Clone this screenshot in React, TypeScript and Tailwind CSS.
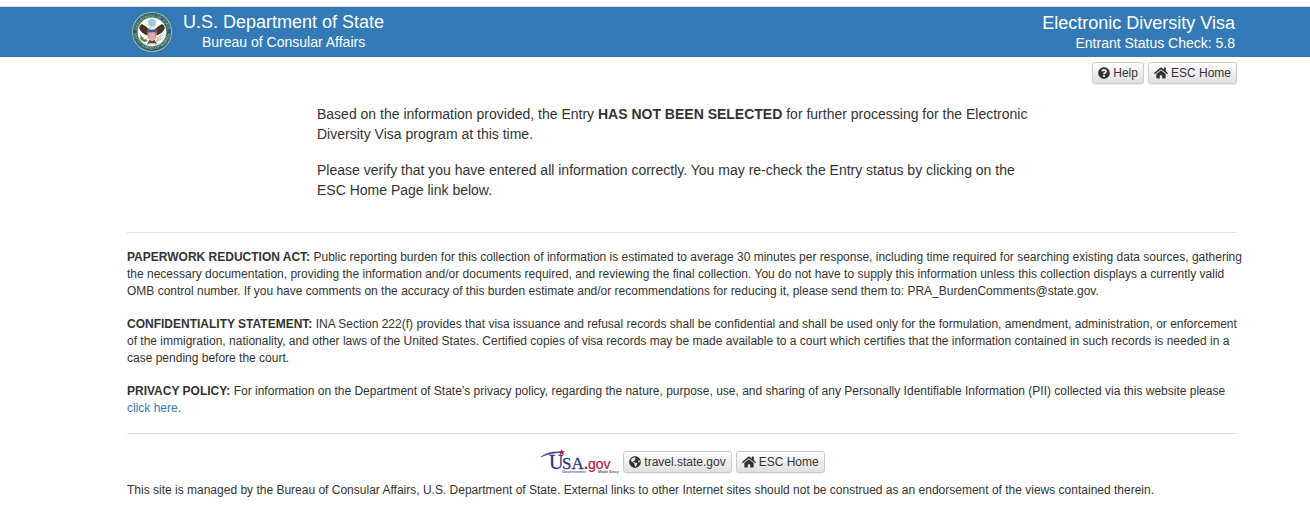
import type { ReactNode } from "react";
import { FaGlobeAmericas, FaHome, FaQuestionCircle } from "react-icons/fa";

function StateSeal() {
  return (
    <svg viewBox="0 0 120 120" className="size-10 shrink-0" role="img" aria-label="Department of State seal">
      <defs>
        <path id="seal-top" d="M14 61a46 46 0 0 1 92 0" />
        <path id="seal-bottom" d="M6 58a54 54 0 0 0 108 0" />
      </defs>
      <circle cx="60" cy="60" r="60" fill="#b9b884" />
      <circle cx="60" cy="60" r="57" fill="#1f5f7c" />
      <circle cx="60" cy="60" r="44" fill="#c9bd7c" />
      <circle cx="60" cy="60" r="42" fill="#fdfdfa" />
      <g fill="#d6d292" fontFamily="Liberation Sans, sans-serif" fontSize="11">
        <text textAnchor="middle">
          <textPath href="#seal-top" startOffset="50%">DEPARTMENT OF STATE</textPath>
        </text>
        <text textAnchor="middle">
          <textPath href="#seal-bottom" startOffset="50%">UNITED STATES OF AMERICA</textPath>
        </text>
      </g>
      <circle cx="60" cy="32" r="12" fill="#9ccbe8" />
      <path d="M56 56C49 50 41 42 30 36c-7 4-9 9-8 14 4 9 13 17 27 21l6-5z" fill="#4b3226" />
      <path d="M64 56c7-6 15-14 26-20 7 4 9 9 8 14-4 9-13 17-27 21l-6-5z" fill="#4b3226" />
      <path d="M52 84l-7 13h30l-7-13z" fill="#5d4636" />
      <path d="M49 94h22l-3 6H52z" fill="#e9e5d8" />
      <path d="M53 53c0-7 3-11 8-11 4 0 6 4 6 11z" fill="#f3f0e4" stroke="#8b7b65" strokeWidth="1" />
      <path d="M54 46l-6 2 6 2z" fill="#d8a93b" />
      <path d="M47 53h26v17c0 9-6 15-13 18-7-3-13-9-13-18z" fill="#f5e4e1" />
      <path d="M49 60v20M54 60v25M60 60v27M66 60v25M71 60v20" stroke="#cf7277" strokeWidth="3" />
      <path d="M47 53h26v8H47z" fill="#35558f" />
      <path d="M46 85C38 89 30 84 25 76" fill="none" stroke="#4f8054" strokeWidth="5" />
      <path d="M26 70l3 7M33 75l-1 9M40 80l-3 8" stroke="#35694a" strokeWidth="3" />
      <path d="M72 87l20-16M72 90l22-12M73 84l15-17" stroke="#94908a" strokeWidth="2" />
    </svg>
  );
}

function UsaGovLogo() {
  return (
    <svg viewBox="0 0 80 26" className="h-[26px] w-20 shrink-0" role="img" aria-label="USA.gov, Government Made Easy">
      <path d="M2 8C8 3.500 15 2 23 3.500 16 3.800 9 4.500 2 8z" fill="#2f3479" stroke="#2f3479" strokeWidth=".6" />
      <path d="M22.500 0l1 2.300 2.600-.2-2 1.600 1 2.300-2.400-1.300-2.100 1.500.7-2.400-2-1.500 2.500-.1z" fill="#c4123f" />
      <text x="10" y="20" fontFamily="Liberation Serif, serif" fontSize="20" fill="#2f3479" stroke="#2f3479" strokeWidth=".3">U</text>
      <text x="23" y="20" fontFamily="Liberation Serif, serif" fontSize="17" fill="#2f3479" stroke="#2f3479" strokeWidth=".3">SA</text>
      <text x="45" y="20" fontFamily="Liberation Sans, sans-serif" fontSize="14" fill="#c4123f" stroke="#c4123f" strokeWidth=".2">
        <tspan fontWeight="700">.</tspan>gov
      </text>
      <g fontFamily="Liberation Sans, sans-serif" fontSize="4" fontWeight="700" fill="#5c5f9a">
        <text x="23" y="24">Government</text>
        <text x="59" y="24">Made Easy</text>
      </g>
    </svg>
  );
}

function IconButton({ icon, children }: { icon: ReactNode; children: ReactNode }) {
  return (
    <button
      type="button"
      className="flex h-[22px] items-center gap-[3px] rounded-[3px] border border-[#ccc] bg-linear-to-b from-white to-[#e0e0e0] px-[5px] text-xs whitespace-nowrap shadow-[0_1px_1px_rgba(0,0,0,0.08)]"
    >
      {icon}
      {children}
    </button>
  );
}

export default function App() {
  return (
    <div className="bg-white pt-[6px] font-['Liberation_Sans',Arial,sans-serif] text-sm leading-5 text-[#333]">
      <header className="flex items-start justify-between border-t border-[#ddd] bg-[#337ab7] pr-[75px] pl-[132px] text-white">
        <div className="flex h-[50px] gap-[11px] pt-[5px]">
          <StateSeal />
          <div>
            <h1 className="text-lg leading-5">U.S. Department of State</h1>
            <p className="pl-[19px]">Bureau of Consular Affairs</p>
          </div>
        </div>
        <div className="pt-[6px] text-right">
          <h2 className="text-lg leading-5">Electronic Diversity Visa</h2>
          <p>Entrant Status Check: 5.8</p>
        </div>
      </header>

      <div className="pr-[73px] pl-[127px]">
        <nav className="flex justify-end gap-1 pt-[5px]">
          <IconButton icon={<FaQuestionCircle size={12} />}>Help</IconButton>
          <IconButton icon={<FaHome size={14} />}>ESC Home</IconButton>
        </nav>

        <main className="mx-auto max-w-[730px] space-y-4 pt-5 pb-8">
          <p>
            Based on the information provided, the Entry <b>HAS NOT BEEN SELECTED</b> for further processing for the
            Electronic Diversity Visa program at this time.
          </p>
          <p>
            Please verify that you have entered all information correctly. You may re-check the Entry status by clicking
            on the ESC Home Page link below.
          </p>
        </main>

        <section className="border-y border-[#e3e3e3] py-4 text-xs leading-[17px]">
          <div className="-mr-2 space-y-4">
            <p>
              <b>PAPERWORK REDUCTION ACT:</b> Public reporting burden for this collection of information is estimated to
              average 30 minutes per response, including time required for searching existing data sources, gathering the
              necessary documentation, providing the information and/or documents required, and reviewing the final
              collection. You do not have to supply this information unless this collection displays a currently valid
              OMB control number. If you have comments on the accuracy of this burden estimate and/or recommendations for
              reducing it, please send them to: PRA_BurdenComments@state.gov.
            </p>
            <p>
              <b>CONFIDENTIALITY STATEMENT:</b> INA Section 222(f) provides that visa issuance and refusal records shall
              be confidential and shall be used only for the formulation, amendment, administration, or enforcement of
              the immigration, nationality, and other laws of the United States. Certified copies of visa records may be
              made available to a court which certifies that the information contained in such records is needed in a
              case pending before the court.
            </p>
            <p>
              <b>PRIVACY POLICY:</b> For information on the Department of State’s privacy policy, regarding the nature,
              purpose, use, and sharing of any Personally Identifiable Information (PII) collected via this website
              please{" "}
              <a href="#privacy" className="text-[#337ab7]">
                click here
              </a>
              .
            </p>
          </div>
        </section>

        <footer className="pt-[15px] text-xs leading-[17px]">
          <div className="flex items-center justify-center gap-1">
            <UsaGovLogo />
            <IconButton icon={<FaGlobeAmericas size={12} />}>travel.state.gov</IconButton>
            <IconButton icon={<FaHome size={14} />}>ESC Home</IconButton>
          </div>
          <p className="pt-[7px]">
            This site is managed by the Bureau of Consular Affairs, U.S. Department of State. External links to other
            Internet sites should not be construed as an endorsement of the views contained therein.
          </p>
        </footer>
      </div>
    </div>
  );
}
